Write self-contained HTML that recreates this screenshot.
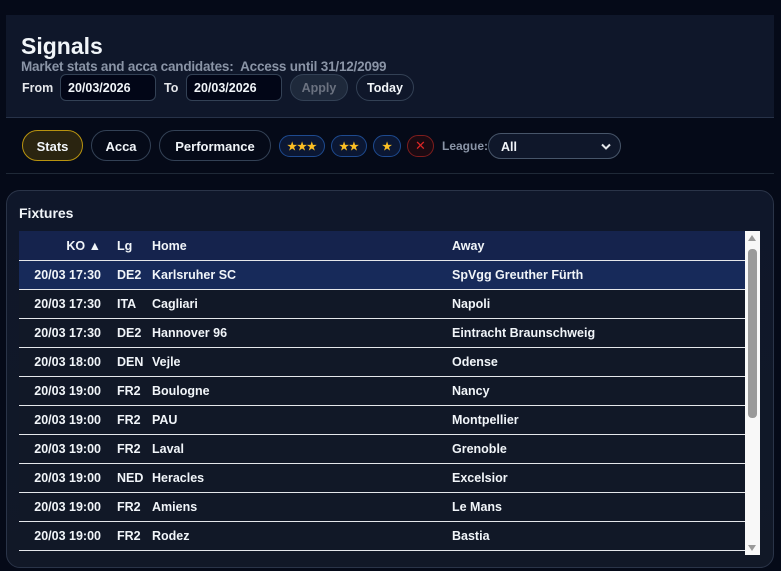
<!DOCTYPE html>
<html><head><style>
*{box-sizing:border-box;margin:0;padding:0}
body{width:781px;height:571px;overflow:hidden;background:#050a18;font-family:"Liberation Sans",sans-serif;font-weight:bold;color:#f1f5f9;position:relative}
.hdr{position:absolute;left:6px;top:15px;width:768px;height:103px;background:#0f172a;border-bottom:1px solid #273248}
.abs{position:absolute}
h1{position:absolute;left:21px;top:33px;font-size:23px;color:#f1f5f9}
.sub{left:21px;top:59px;font-size:13.5px;color:#8a94a6;letter-spacing:-0.2px}
.lbl{font-size:12.5px;color:#e5e7eb}
.inp{height:27px;border:1px solid #334155;border-radius:6px;background:#020617;font-size:12.5px;color:#f1f5f9;padding:6px 0 0 7px}
.btn{height:27px;border:1px solid #334155;border-radius:14px;font-size:12.5px;text-align:center;padding-top:6px}
.sep{position:absolute;left:6px;width:768px;height:1px;background:#1f2937}
.pill{position:absolute;top:130px;height:31px;border:1px solid #334155;border-radius:16px;font-size:13px;text-align:center;padding-top:8px}
.star{position:absolute;top:135px;height:22px;border:1px solid #1e4a8f;border-radius:11px;background:#0b1733;color:#fbbf24;font-size:11px;text-align:center;padding-top:4px}
.card{position:absolute;left:6px;top:190px;width:768px;height:378px;border:1px solid #2a3448;border-radius:14px;background:linear-gradient(#0f172a,#111827)}
table{position:absolute;left:19px;top:231px;width:726px;border-collapse:collapse;font-size:12.5px}
td,th{height:29px;border-bottom:1px solid #e5e7eb;text-align:left;padding:0}
th{background:#15234d;font-weight:bold;border-bottom:1px solid #e5e7eb;padding-top:1px}
tr.sel td{background:#172a5a}
tbody td{background:#111827}
.c1{width:98px;text-align:right;padding-right:16px}
.c2{width:35px}.c3{width:300px}
</style></head><body>
<div class="hdr"></div>
<h1>Signals</h1>
<div class="abs sub">Market stats and acca candidates:&nbsp; Access until 31/12/2099</div>
<div class="abs lbl" style="left:22px;top:81px">From</div>
<div class="abs inp" style="left:60px;top:74px;width:96px">20/03/2026</div>
<div class="abs lbl" style="left:164px;top:81px">To</div>
<div class="abs inp" style="left:186px;top:74px;width:96px">20/03/2026</div>
<div class="abs btn" style="left:290px;top:74px;width:58px;background:#1e293b;color:#6b7280">Apply</div>
<div class="abs btn" style="left:356px;top:74px;width:58px">Today</div>
<div class="sep" style="top:173px"></div>
<div class="pill" style="left:22px;width:61px;border-color:#b8930f;background:#2a2410">Stats</div>
<div class="pill" style="left:91px;width:60px">Acca</div>
<div class="pill" style="left:159px;width:112px">Performance</div>
<div class="star" style="left:279px;width:46px">★★★</div>
<div class="star" style="left:331px;width:36px">★★</div>
<div class="star" style="left:373px;width:28px">★</div>
<div class="star" style="left:407px;width:27px;border-color:#7f1d1d;background:#1a0a12;color:#dc2626;font-size:13px;padding-top:2px;font-weight:normal">✕</div>
<div class="abs" style="left:442px;top:139px;font-size:12px;color:#8a94a6">League:</div>
<div class="abs" style="left:488px;top:133px;width:133px;height:26px;border:1px solid #475569;border-radius:13px;background:#0f172a;font-size:12.5px;padding:6px 0 0 12px">All<svg style="position:absolute;right:9px;top:9px" width="10" height="7" viewBox="0 0 10 7"><path d="M1 1.5L5 5.5L9 1.5" stroke="#e5e7eb" stroke-width="2" fill="none"/></svg></div>
<div class="card"></div>
<div class="abs" style="left:19px;top:205px;font-size:14px">Fixtures</div>
<table>
<thead><tr><th class="c1">KO ▲</th><th class="c2">Lg</th><th class="c3">Home</th><th>Away</th></tr></thead>
<tbody>
<tr class="sel"><td class="c1">20/03 17:30</td><td>DE2</td><td>Karlsruher SC</td><td>SpVgg Greuther Fürth</td></tr>
<tr><td class="c1">20/03 17:30</td><td>ITA</td><td>Cagliari</td><td>Napoli</td></tr>
<tr><td class="c1">20/03 17:30</td><td>DE2</td><td>Hannover 96</td><td>Eintracht Braunschweig</td></tr>
<tr><td class="c1">20/03 18:00</td><td>DEN</td><td>Vejle</td><td>Odense</td></tr>
<tr><td class="c1">20/03 19:00</td><td>FR2</td><td>Boulogne</td><td>Nancy</td></tr>
<tr><td class="c1">20/03 19:00</td><td>FR2</td><td>PAU</td><td>Montpellier</td></tr>
<tr><td class="c1">20/03 19:00</td><td>FR2</td><td>Laval</td><td>Grenoble</td></tr>
<tr><td class="c1">20/03 19:00</td><td>NED</td><td>Heracles</td><td>Excelsior</td></tr>
<tr><td class="c1">20/03 19:00</td><td>FR2</td><td>Amiens</td><td>Le Mans</td></tr>
<tr><td class="c1">20/03 19:00</td><td>FR2</td><td>Rodez</td><td>Bastia</td></tr>
</tbody></table>
<div class="abs" style="left:745px;top:231px;width:15px;height:324px;background:#f8f8f8"></div>
<div class="abs" style="left:748px;top:249px;width:9px;height:169px;background:#9a9a9a;border-radius:4px"></div>
<div class="abs" style="left:748px;top:235px;width:0;height:0;border-left:4.5px solid transparent;border-right:4.5px solid transparent;border-bottom:6px solid #9a9a9a"></div>
<div class="abs" style="left:748px;top:545px;width:0;height:0;border-left:4.5px solid transparent;border-right:4.5px solid transparent;border-top:6px solid #9a9a9a"></div>
</body></html>
